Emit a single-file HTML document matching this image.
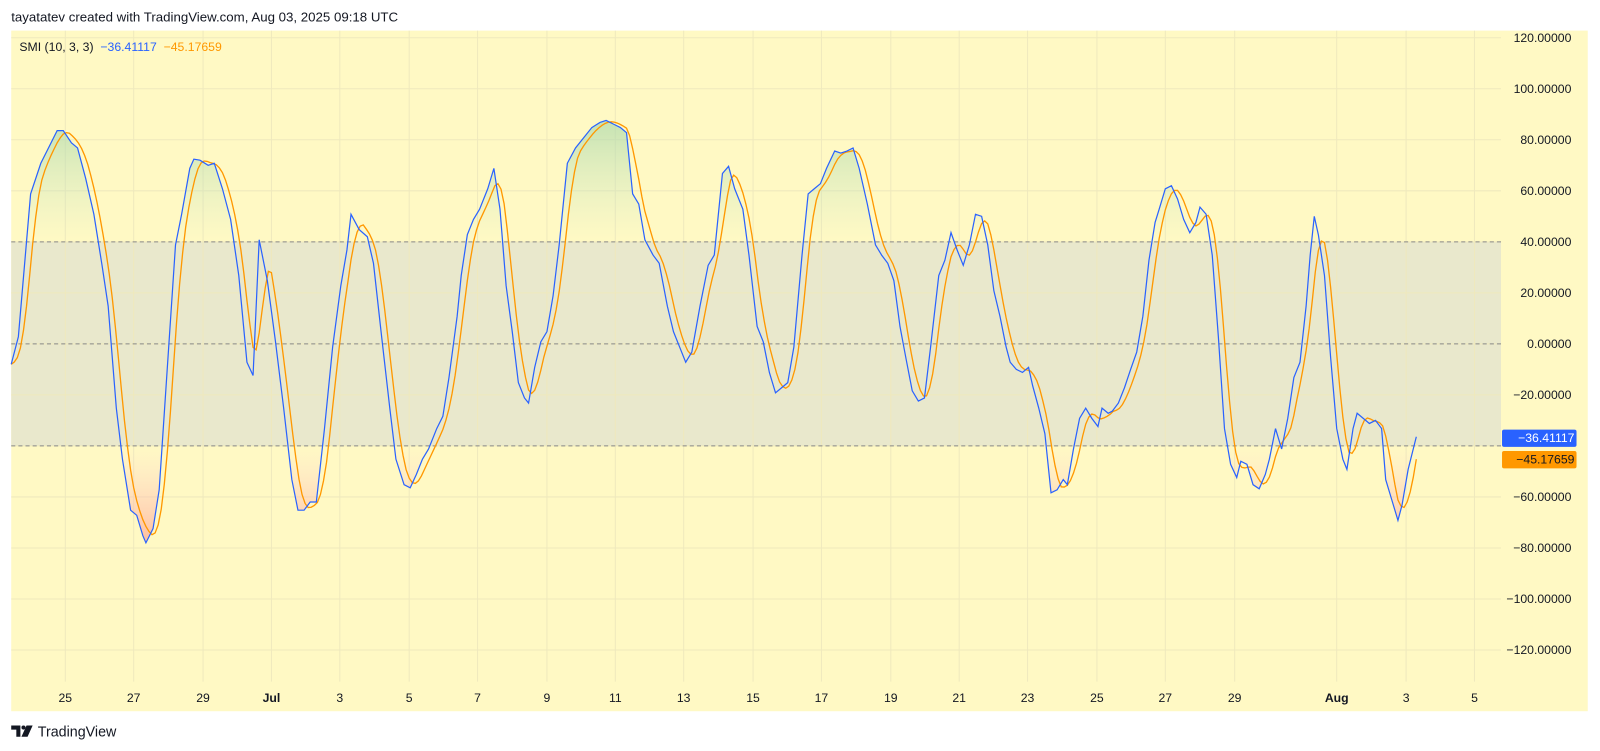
<!DOCTYPE html>
<html><head><meta charset="utf-8"><style>
body{margin:0;width:1600px;height:751px;background:#fff;font-family:"Liberation Sans",sans-serif;overflow:hidden;position:relative}
#w{position:absolute;left:0;top:0;width:1568px;height:736px;transform:scale(1.0204);transform-origin:0 0}
.t{position:absolute;white-space:nowrap}
</style></head><body><div id="w">
<div class="t" style="left:11px;top:9px;font-size:13px;color:#131722">tayatatev created with TradingView.com, Aug 03, 2025 09:18 UTC</div>
<svg id="s" width="1568" height="736" style="position:absolute;left:0;top:0">
<defs>
<linearGradient id="gg" x1="0" y1="110" x2="0" y2="237" gradientUnits="userSpaceOnUse"><stop offset="0" stop-color="#a5d6a7" stop-opacity="0.7"/><stop offset="1" stop-color="#c8e6c9" stop-opacity="0"/></linearGradient>
<linearGradient id="og" x1="0" y1="437" x2="0" y2="535" gradientUnits="userSpaceOnUse"><stop offset="0" stop-color="#ffcdd2" stop-opacity="0"/><stop offset="1" stop-color="#ffab91" stop-opacity="0.8"/></linearGradient>
<clipPath id="ct"><rect x="11" y="30" width="1460" height="207"/></clipPath>
<clipPath id="cb"><rect x="11" y="437" width="1460" height="230"/></clipPath>
</defs>
<rect x="11" y="30" width="1545" height="667" fill="#fff9c4"/>
<rect x="11" y="237" width="1460" height="200" fill="#e9e8cc"/>
<g id="grid" stroke="#efe9bd" stroke-width="1"></g>
<g stroke="#888" stroke-dasharray="4,3" stroke-width="1"><line x1="11" x2="1471" y1="237" y2="237"/><line x1="11" x2="1471" y1="337" y2="337"/><line x1="11" x2="1471" y1="437" y2="437"/></g>
<path id="fg" fill="url(#gg)" clip-path="url(#ct)"/>
<path id="fo" fill="url(#og)" clip-path="url(#cb)"/>
<path id="po" fill="none" stroke="#ff9800" stroke-width="1.3"/>
<path id="pb" fill="none" stroke="#2962ff" stroke-width="1.2"/>
<g id="lab" font-size="12" fill="#131722" font-family="Liberation Sans,sans-serif"></g>
<g fill="#131722" transform="translate(11,711)"><path d="M0,0H9V11H5V4H0Z"/><circle cx="12" cy="2" r="2"/><path d="M15,0H21L16,11H10Z"/></g>
</svg>
<div class="t" style="left:19px;top:39px;font-size:12px;color:#131722">SMI (10, 3, 3) &nbsp;<span style="color:#2962ff">−36.41117</span>&nbsp; <span style="color:#ff9800">−45.17659</span></div>
<div class="t" style="left:1472px;top:421px;width:71px;height:17px;background:#2962ff;color:#fff;font-size:12px;line-height:17px;text-align:right;padding-right:2px;border-radius:2px">−36.41117</div>
<div class="t" style="left:1472px;top:442px;width:71px;height:17px;background:#ff9800;color:#131722;font-size:12px;line-height:17px;text-align:right;padding-right:2px;border-radius:2px">−45.17659</div>
<div class="t" style="left:37px;top:709px;font-size:14px;color:#131722">TradingView</div>
</div>
<script>
var B=[[11,357],[18,330],[30,190],[40,160],[50,140],[56,128],[62,128],[70,140],[76,145],[84,175],[92,210],[100,260],[106,300],[114,400],[120,450],[128,500],[134,505],[140,525],[143,532],[150,518],[156,480],[164,360],[172,240],[178,210],[186,165],[190,156],[196,157],[204,162],[210,160],[218,185],[226,215],[234,270],[242,355],[248,368],[254,235],[262,275],[270,335],[278,400],[286,470],[292,500],[298,500],[304,492],[310,492],[318,420],[326,340],[334,280],[340,245],[344,210],[352,225],[360,232],[366,258],[374,330],[382,400],[388,450],[396,475],[402,478],[408,465],[414,450],[420,440],[428,420],[434,408],[440,370],[448,310],[452,270],[458,230],[464,215],[470,205],[478,185],[484,165],[490,205],[496,280],[502,325],[508,375],[514,390],[518,395],[524,360],[530,335],[536,325],[542,290],[548,240],[556,160],[564,145],[572,135],[580,125],[588,120],[594,118],[602,122],[608,125],[614,130],[620,190],[626,200],[632,235],[640,250],[646,258],[654,300],[660,325],[666,340],[672,355],[678,345],[686,300],[694,260],[700,250],[708,170],[714,163],[720,185],[728,205],[734,250],[742,320],[748,335],[754,365],[760,385],[766,380],[772,375],[778,340],[786,250],[792,190],[798,185],[804,180],[810,165],[818,148],[824,150],[830,148],[836,145],[842,165],[850,200],[858,240],[864,250],[870,258],[876,275],[882,320],[888,352],[894,383],[900,393],[906,390],[912,340],[920,270],[926,255],[932,228],[938,245],[944,260],[950,240],[956,210],[962,212],[968,240],[974,285],[980,310],[986,340],[990,355],[996,362],[1002,365],[1008,360],[1012,378],[1018,400],[1024,425],[1030,483],[1036,480],[1042,470],[1046,475],[1052,440],[1058,410],[1064,400],[1070,410],[1076,418],[1080,400],[1086,405],[1090,403],[1096,395],[1102,380],[1108,362],[1114,345],[1120,310],[1126,255],[1132,218],[1136,205],[1142,185],[1148,182],[1154,195],[1160,215],[1166,228],[1172,218],[1176,203],[1182,210],[1188,250],[1194,330],[1200,420],[1206,455],[1212,468],[1216,452],[1222,455],[1228,475],[1234,479],[1240,465],[1244,450],[1250,420],[1256,440],[1262,410],[1268,370],[1274,355],[1280,300],[1284,250],[1288,212],[1292,230],[1298,270],[1304,350],[1310,420],[1316,450],[1320,460],[1326,420],[1330,405],[1336,410],[1342,415],[1348,412],[1354,420],[1358,470],[1364,490],[1370,510],[1374,495],[1380,460],[1388,428]];
function f(x){if(x<=B[0][0])return B[0][1];for(var i=1;i<B.length;i++)if(B[i][0]>=x){var a=B[i-1],b=B[i];return a[1]+(b[1]-a[1])*(x-a[0])/(b[0]-a[0]);}return B[B.length-1][1];}
var pb="M"+B.map(p=>p.join(",")).join("L");
var O=[];for(var x=11;x<=1388;x+=3){var s=0,n=0;for(var k=0;k<=12;k+=2){s+=f(x-k);n++;}O.push([x,(s/n).toFixed(1)]);}
O[O.length-1][1]=450;
var po="M"+O.map(p=>p.join(",")).join("L");
document.getElementById("pb").setAttribute("d",pb);
document.getElementById("po").setAttribute("d",po);
document.getElementById("fg").setAttribute("d",pb+"L1388,237L11,237Z");
document.getElementById("fo").setAttribute("d",pb+"L1388,437L11,437Z");
var g=document.getElementById("grid"),L=document.getElementById("lab"),h="",l="";
var xs=[[64,"25"],[131,"27"],[199,"29"],[266,"Jul"],[333,"3"],[401,"5"],[468,"7"],[536,"9"],[603,"11"],[670,"13"],[738,"15"],[805,"17"],[873,"19"],[940,"21"],[1007,"23"],[1075,"25"],[1142,"27"],[1210,"29"],[1310,"Aug"],[1378,"3"],[1445,"5"]];
xs.forEach(a=>{h+='<line x1="'+a[0]+'" x2="'+a[0]+'" y1="30" y2="668"/>';l+='<text x="'+a[0]+'" y="688" text-anchor="middle"'+((a[1]=="Jul"||a[1]=="Aug")?' font-weight="bold"':'')+'>'+a[1]+'</text>';});
for(var v=120;v>=-120;v-=20){var y=337-v*2.5;h+='<line x1="11" x2="1471" y1="'+y+'" y2="'+y+'"/>';if(v!=-40)l+='<text x="1540" y="'+(y+4)+'" text-anchor="end">'+(v<0?'−':'')+Math.abs(v).toFixed(5)+'</text>';}
g.innerHTML=h;L.innerHTML=l;
</script>
</body></html>
